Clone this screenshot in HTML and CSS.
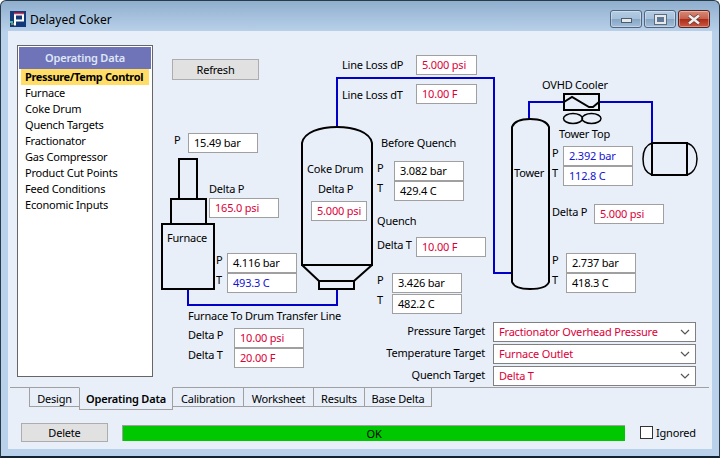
FILE: index.html
```html
<!DOCTYPE html>
<html lang="en">
<head>
    <meta charset="UTF-8">
    <title>Delayed Coker</title>
    <link rel="stylesheet" href="styles.css">
</head>
<body>

<div class="window">
    <div class="titlebar">
        <svg class="app-icon" width="16" height="16" viewBox="0 0 16 16">
            <rect width="16" height="16" fill="#123a78"/>
            <path d="M0 10H3V12H0Z" fill="#35c0b0"/>
            <path d="M1 13H4" stroke="#e8d040" stroke-width="1"/>
            <path d="M5 14.500V3.500H13V9.500H5" fill="none" stroke="#fff" stroke-width="2"/>
            <path d="M4 2.500H14" stroke="#e0304a" stroke-width="1.500"/>
        </svg>
        <span class="title">Delayed Coker</span>
        <div class="win-buttons">
            <div class="win-btn"><span class="glyph-min"></span></div>
            <div class="win-btn"><span class="glyph-max"></span></div>
            <div class="win-btn win-close">
                <svg width="16" height="11" viewBox="0 0 16 11">
                    <path d="M3 1.500L13 9.500M13 1.500L3 9.500" stroke="#5a3030" stroke-width="3.800"/>
                    <path d="M3 1.500L13 9.500M13 1.500L3 9.500" stroke="#eee" stroke-width="2.600"/>
                </svg>
            </div>
        </div>
    </div>

    <div class="client">
        <div class="main">
            <div class="sidebar">
                <div class="side-head">Operating Data</div>
                <div class="side-item selected">Pressure/Temp Control</div>
                <div class="side-item">Furnace</div>
                <div class="side-item">Coke Drum</div>
                <div class="side-item">Quench Targets</div>
                <div class="side-item">Fractionator</div>
                <div class="side-item">Gas Compressor</div>
                <div class="side-item">Product Cut Points</div>
                <div class="side-item">Feed Conditions</div>
                <div class="side-item">Economic Inputs</div>
            </div>

            <div class="canvas">
                <svg class="flowsheet" width="552" height="347" viewBox="160 40 552 347">
                    <!-- process lines -->
                    <g class="pipe">
                        <path d="M188 289V305H337V289"/>
                        <path d="M337 127V78H494V273H512"/>
                        <path d="M529 119V102H564"/>
                        <path d="M599 102H652V143"/>
                    </g>
                    <!-- furnace -->
                    <g class="vessel">
                        <rect x="179" y="159" width="18" height="40"/>
                        <rect x="171" y="199" width="35" height="25"/>
                        <rect x="162" y="224" width="52" height="65"/>
                    </g>
                    <!-- coke drum -->
                    <g class="vessel">
                        <path d="M302 265V143C304 132 320 127 337 127C354 127 370 132 372 143V265Z"/>
                        <path d="M302 265L319 281M372 265L354 281"/>
                        <rect x="319" y="281" width="35" height="8"/>
                    </g>
                    <!-- tower -->
                    <path class="vessel" d="M512 127C514 122 520 119 530 119C540 119 547 122 549 127V282C547 287 540 289 530 289C520 289 514 287 512 282Z"/>
                    <!-- overhead cooler -->
                    <g class="vessel">
                        <rect x="564" y="94" width="35" height="16"/>
                        <path d="M564 102L572 97L589 107L593 107L599 102"/>
                    </g>
                    <g class="vessel thin">
                        <ellipse cx="573" cy="118.5" rx="9.5" ry="5"/>
                        <ellipse cx="591.500" cy="118.5" rx="9.500" ry="5"/>
                        <path d="M652 143C646 145 643 151 643 159C643 167 646 173 652 175"/>
                        <path d="M687 143C693 145 697 151 697 159C697 167 693 173 687 175"/>
                    </g>
                    <g class="vessel">
                        <rect x="652" y="143" width="35" height="32"/>
                    </g>
                </svg>

                <div class="btn refresh">Refresh</div>

                <span class="lbl l-stack-p">P</span>
                <div class="val v-stack-p">15.49 bar</div>
                <span class="lbl l-furn-dp">Delta P</span>
                <div class="val red v-furn-dp">165.0 psi</div>
                <span class="lbl l-furnace">Furnace</span>
                <span class="lbl l-fout-p">P</span>
                <span class="lbl l-fout-t">T</span>
                <div class="val v-fout-p">4.116 bar</div>
                <div class="val blue v-fout-t">493.3 C</div>

                <span class="lbl l-line">Furnace To Drum Transfer Line</span>
                <span class="lbl l-line-dp">Delta P</span>
                <span class="lbl l-line-dt">Delta T</span>
                <div class="val red v-line-dp">10.00 psi</div>
                <div class="val red v-line-dt">20.00 F</div>

                <span class="lbl l-loss-dp">Line Loss dP</span>
                <span class="lbl l-loss-dt">Line Loss dT</span>
                <div class="val red v-loss-dp">5.000 psi</div>
                <div class="val red v-loss-dt">10.00 F</div>

                <span class="lbl l-drum">Coke Drum</span>
                <span class="lbl l-drum-dp">Delta P</span>
                <div class="val red v-drum-dp">5.000 psi</div>

                <span class="lbl l-before">Before Quench</span>
                <span class="lbl l-bq-p">P</span>
                <span class="lbl l-bq-t">T</span>
                <div class="val v-bq-p">3.082 bar</div>
                <div class="val v-bq-t">429.4 C</div>
                <span class="lbl l-quench">Quench</span>
                <span class="lbl l-q-dt">Delta T</span>
                <div class="val red v-q-dt">10.00 F</div>
                <span class="lbl l-aq-p">P</span>
                <span class="lbl l-aq-t">T</span>
                <div class="val v-aq-p">3.426 bar</div>
                <div class="val v-aq-t">482.2 C</div>

                <span class="lbl l-ovhd">OVHD Cooler</span>
                <span class="lbl l-top">Tower Top</span>
                <span class="lbl l-tower">Tower</span>
                <span class="lbl l-top-p">P</span>
                <span class="lbl l-top-t">T</span>
                <div class="val blue v-top-p">2.392 bar</div>
                <div class="val blue v-top-t">112.8 C</div>
                <span class="lbl l-tw-dp">Delta P</span>
                <div class="val red v-tw-dp">5.000 psi</div>
                <span class="lbl l-btm-p">P</span>
                <span class="lbl l-btm-t">T</span>
                <div class="val v-btm-p">2.737 bar</div>
                <div class="val v-btm-t">418.3 C</div>

                <div class="targets">
                    <div class="target-row">
                        <span class="target-lbl">Pressure Target</span>
                        <div class="select"><span>Fractionator Overhead Pressure</span>
                            <svg width="10" height="6" viewBox="0 0 10 6"><path d="M1 1L5 5L9 1" fill="none" stroke="#555" stroke-width="1.200"/></svg>
                        </div>
                    </div>
                    <div class="target-row">
                        <span class="target-lbl">Temperature Target</span>
                        <div class="select"><span>Furnace Outlet</span>
                            <svg width="10" height="6" viewBox="0 0 10 6"><path d="M1 1L5 5L9 1" fill="none" stroke="#555" stroke-width="1.200"/></svg>
                        </div>
                    </div>
                    <div class="target-row">
                        <span class="target-lbl">Quench Target</span>
                        <div class="select"><span>Delta T</span>
                            <svg width="10" height="6" viewBox="0 0 10 6"><path d="M1 1L5 5L9 1" fill="none" stroke="#555" stroke-width="1.200"/></svg>
                        </div>
                    </div>
                </div>
            </div>
        </div>

        <div class="tabs">
            <div class="tab t-design">Design</div>
            <div class="tab t-opdata active">Operating Data</div>
            <div class="tab t-calib">Calibration</div>
            <div class="tab t-work">Worksheet</div>
            <div class="tab t-results">Results</div>
            <div class="tab t-base">Base Delta</div>
        </div>

        <div class="footer">
            <div class="btn delete">Delete</div>
            <div class="status">OK</div>
            <div class="check"></div>
            <span class="check-lbl">Ignored</span>
        </div>
    </div>
</div>

</body>
</html>
```

FILE: styles.css
```css
* {
    box-sizing: border-box;
}
body {
    margin: 0;
    font-family: "Noto Sans", sans-serif;
    font-size: 11px;
    line-height: 14px;
    letter-spacing: -0.2px;
    color: #000;
    background-color: #fff;
}
.window {
    display: flex;
    flex-direction: column;
    width: 720px;
    height: 458px;
    padding: 0 8px 8px 8px;
    background: linear-gradient(#8fafce 0, #b9d1ea 31px);
    border: 1px solid #2a3a48;
    border-bottom: 2px solid #123;
    border-radius: 6px 6px 0 0;
}

/* title bar */
.titlebar {
    display: flex;
    align-items: flex-start;
    flex: none;
    height: 30px;
    margin-left: 1px;
}
.app-icon {
    margin-top: 10px;
}
.title {
    margin: 12px 0 0 4px;
    font-size: 12px;
    letter-spacing: 0;
}
.win-buttons {
    display: flex;
    gap: 2px;
    margin-left: auto;
    margin-top: 9px;
    margin-right: 1px;
}
.win-btn {
    display: flex;
    align-items: center;
    justify-content: center;
    width: 32px;
    height: 18px;
    border: 1px solid #4f6580;
    border-radius: 3px;
    background: linear-gradient(#b4cce3 0, #a6c0da 50%, #86a6c6 51%, #a2bdd8 100%);
    box-shadow: inset 0 0 0 1px rgba(255,255,255,0.35);
}
.glyph-min {
    width: 11px;
    height: 5px;
    margin-top: 3px;
    background-color: #e8e8e8;
    border: 1px solid #4a5c70;
}
.glyph-max {
    width: 11px;
    height: 9px;
    background-color: #5f7a98;
    border: 2px solid #e8e8e8;
    outline: 1px solid #5a6c80;
}
.win-close {
    background: linear-gradient(#d88a78 0, #c4604c 50%, #ae2a18 51%, #c85a44 100%);
    border-color: #5a2420;
}

/* client area */
.client {
    display: flex;
    flex-direction: column;
    flex: 1;
    background-color: #e8eff9;
    margin: 0 -1px -1px -1px;
}
.main {
    display: flex;
    flex: none;
    height: 356px;
    padding: 9px 0 0 9px;
}
.sidebar {
    width: 136px;
    height: 332px;
    margin-top: 5px;
    padding: 1px;
    border: 1px solid #666;
    background-color: #fff;
}
.side-head {
    height: 22px;
    line-height: 22px;
    text-align: center;
    background-color: #6f74b9;
    color: #dfe6f6;
    font-weight: 600;
}
.side-item {
    height: 16px;
    line-height: 16px;
    margin: 0 2px;
    padding-left: 4px;
    white-space: nowrap;
}
.side-item.selected {
    background-color: #ffdd66;
    font-weight: 700;
    letter-spacing: -0.35px;
}

/* flowsheet */
.canvas {
    position: relative;
    width: 552px;
    height: 347px;
    margin-left: 7px;
}
.flowsheet {
    position: absolute;
    left: 0;
    top: 0;
}
.pipe path {
    fill: none;
    stroke: #0000c8;
    stroke-width: 2;
}
.vessel, .vessel rect, .vessel path, .vessel ellipse {
    fill: none;
    stroke: #000;
    stroke-width: 2;
}
.thin path, .thin ellipse {
    stroke-width: 1.5;
}
.lbl {
    position: absolute;
    white-space: nowrap;
}
.val {
    position: absolute;
    width: 70px;
    height: 20px;
    padding-left: 5px;
    line-height: 17px;
    background-color: #fff;
    border: 1px solid #a0a0a0;
}
.red {
    color: #dc0038;
}
.blue {
    color: #1414d2;
}
.btn {
    height: 21px;
    line-height: 19px;
    text-align: center;
    background-color: #e1e1e1;
    border: 1px solid #adadad;
}
.refresh {
    position: absolute;
    left: 12px;
    top: 19px;
    width: 87px;
}

.l-stack-p { left: 14px; top: 93px; }
.v-stack-p { left: 28px; top: 93px; }
.l-furn-dp { left: 49px; top: 142px; }
.v-furn-dp { left: 49px; top: 158px; }
.l-furnace { left: 7px; top: 191px; }
.l-fout-p { left: 56px; top: 213px; }
.l-fout-t { left: 56px; top: 233px; }
.v-fout-p { left: 67px; top: 213px; }
.v-fout-t { left: 67px; top: 233px; }

.l-line { left: 28px; top: 269px; }
.l-line-dp { left: 28px; top: 288px; }
.l-line-dt { left: 28px; top: 308px; }
.v-line-dp { left: 74px; top: 288px; }
.v-line-dt { left: 74px; top: 308px; }

.l-loss-dp { left: 182px; top: 18px; }
.l-loss-dt { left: 182px; top: 48px; }
.v-loss-dp { left: 256px; top: 15px; width: 61px; }
.v-loss-dt { left: 256px; top: 44px; width: 61px; }

.l-drum { left: 147px; top: 122px; }
.l-drum-dp { left: 158px; top: 142px; }
.v-drum-dp { left: 151px; top: 161px; width: 56px; }

.l-before { left: 221px; top: 96px; }
.l-bq-p { left: 217px; top: 121px; }
.l-bq-t { left: 217px; top: 141px; }
.v-bq-p { left: 234px; top: 121px; }
.v-bq-t { left: 234px; top: 141px; }
.l-quench { left: 217px; top: 174px; }
.l-q-dt { left: 217px; top: 198px; }
.v-q-dt { left: 256px; top: 197px; }
.l-aq-p { left: 217px; top: 233px; }
.l-aq-t { left: 217px; top: 253px; }
.v-aq-p { left: 232px; top: 233px; }
.v-aq-t { left: 232px; top: 254px; }

.l-ovhd { left: 382px; top: 38px; }
.l-top { left: 399px; top: 87px; }
.l-tower { left: 354px; top: 126px; }
.l-top-p { left: 392px; top: 106px; }
.l-top-t { left: 392px; top: 126px; }
.v-top-p { left: 403px; top: 106px; }
.v-top-t { left: 403px; top: 126px; }
.l-tw-dp { left: 392px; top: 165px; }
.v-tw-dp { left: 434px; top: 164px; }
.l-btm-p { left: 392px; top: 213px; }
.l-btm-t { left: 392px; top: 233px; }
.v-btm-p { left: 406px; top: 213px; }
.v-btm-t { left: 406px; top: 233px; }

/* target dropdowns */
.targets {
    position: absolute;
    right: 16px;
    top: 282px;
    display: flex;
    flex-direction: column;
    gap: 2px;
}
.target-row {
    display: flex;
    align-items: center;
    justify-content: flex-end;
    gap: 8px;
}
.target-lbl {
    margin-top: -3px;
}
.select {
    display: flex;
    align-items: center;
    justify-content: space-between;
    width: 203px;
    height: 20px;
    padding: 0 5px;
    background-color: #fff;
    border: 1px solid #808080;
    color: #dc0038;
}

/* tabs */
.tabs {
    display: flex;
    flex: none;
    height: 36px;
    margin: 0 3px 0 2px;
    padding-left: 19px;
    border-top: 1px solid #a0a0a0;
}
.tab {
    height: 20px;
    line-height: 21px;
    margin-top: -1px;
    text-align: center;
    border: 1px solid #a0a0a0;
    border-left-width: 0;
}
.tab.active {
    height: 23px;
    font-weight: 600;
    background-color: #e8eff9;
    border-top-color: #e8eff9;
    border-left-width: 1px;
}
.t-design { width: 51px; border-left-width: 1px; }
.t-opdata { width: 94px; margin-left: -1px; }
.t-calib { width: 71px; }
.t-work { width: 70px; }
.t-results { width: 51px; }
.t-base { width: 67px; }

/* bottom row */
.footer {
    display: flex;
    align-items: center;
    padding-left: 13px;
}
.delete {
    width: 87px;
    height: 19px;
    line-height: 17px;
}
.status {
    width: 503px;
    height: 16px;
    line-height: 15px;
    margin-left: 14px;
    text-align: center;
    background-color: #00c800;
    border-top: 1px solid #a0a0a0;
    border-left: 1px solid #a0a0a0;
}
.check {
    width: 13px;
    height: 13px;
    margin-left: 15px;
    background-color: #fff;
    border: 1px solid #333;
}
.check-lbl {
    margin-left: 3px;
}
```
